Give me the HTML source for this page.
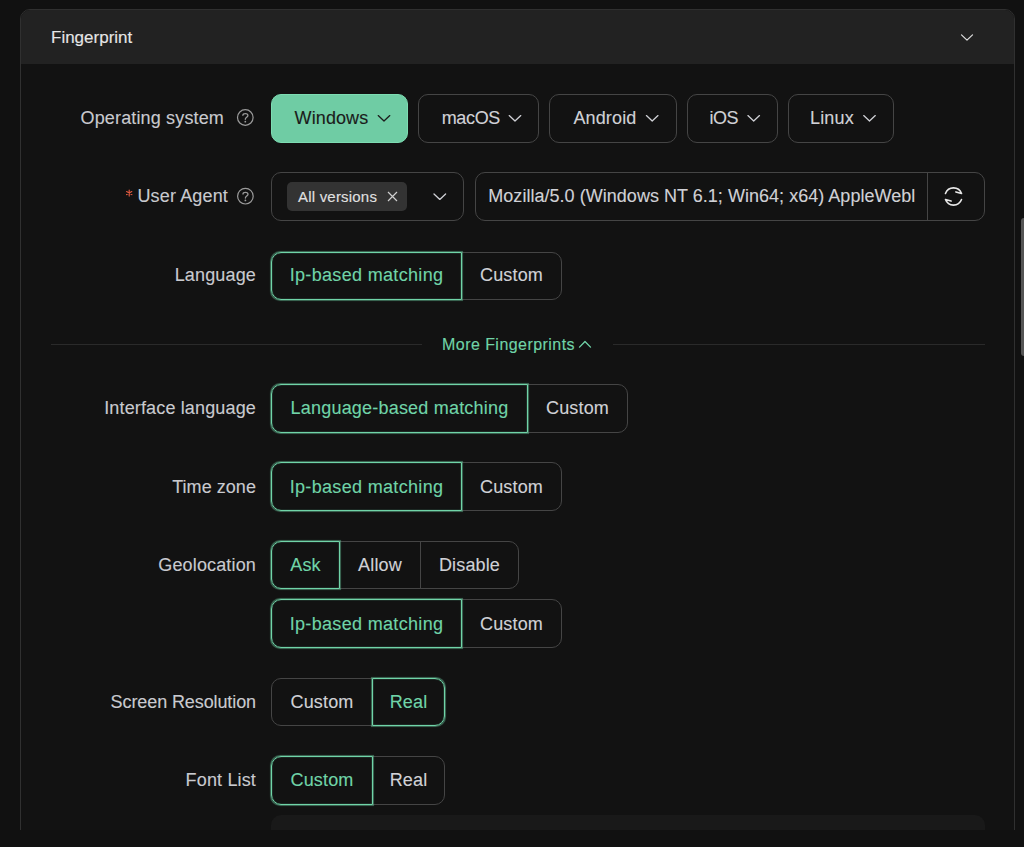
<!DOCTYPE html>
<html><head><meta charset="utf-8">
<style>
*{box-sizing:border-box;margin:0;padding:0}
html,body{width:1024px;height:847px;overflow:hidden;background:#111111}
body{font-family:"Liberation Sans",sans-serif;position:relative;color:#dcdcdc}
#clip{position:absolute;left:0;top:0;width:1024px;height:830px;overflow:hidden}
#card{position:absolute;left:20px;top:9px;width:995px;height:900px;border:1px solid #303030;border-radius:10px;background:#121212;overflow:hidden}
#hdr{position:absolute;left:0;top:0;width:100%;height:54px;background:#222222}
.abs{position:absolute}
.t{position:absolute;white-space:nowrap;line-height:20px;z-index:5;-webkit-text-stroke:0.12px currentColor}
svg{position:absolute;overflow:visible;z-index:6}
#sb{position:absolute;left:1021px;top:218px;width:6px;height:138px;border-radius:3px;background:#555555}
</style></head><body>
<div id="clip">
<div id="card"><div id="hdr"></div></div>

<div class="t" style="left:51px;top:28.02px;color:#e6e6e6;font-size:17px;letter-spacing:0px;">Fingerprint</div>
<svg width="1024" height="847" style="left:0;top:0"><path d="M961.5 34.9 L967 40.1 L972.5 34.9" fill="none" stroke="#dddddd" stroke-width="1.25" stroke-linecap="round" stroke-linejoin="round"/></svg>
<div class="t" style="right:800px;top:108.01px;color:#c9cacf;font-size:18px;letter-spacing:0.15px;">Operating system</div>
<svg width="1024" height="847" style="left:0;top:0"><circle cx="245.3" cy="117.5" r="7.8" fill="none" stroke="#9a9a9a" stroke-width="1.2"/><path d="M242.9 115.3 C242.9 113.1 247.9 112.9 247.9 115.5 C247.9 117.3 245.3 117.3 245.3 119.3" fill="none" stroke="#9a9a9a" stroke-width="1.3" stroke-linecap="round"/><circle cx="245.3" cy="121.7" r="0.9" fill="#9a9a9a"/></svg>
<div class="abs" style="left:271px;top:94px;width:137px;height:49px;border-radius:10px;background:#6fcca4;border:1px solid #7ddcb2;z-index:2"></div>
<div class="t" style="left:294.6px;top:108.01px;color:#1b1b1b;font-size:18px;letter-spacing:0.1px;">Windows</div>
<svg width="1024" height="847" style="left:0;top:0"><path d="M378.2 115.6 L384 121.0 L389.8 115.6" fill="none" stroke="#1b1b1b" stroke-width="1.3" stroke-linecap="round" stroke-linejoin="round"/></svg>
<div class="abs" style="left:418px;top:94px;width:121px;height:49px;border:1px solid #454545;border-radius:10px;background:transparent;z-index:2;"></div>
<div class="t" style="left:441.7px;top:108.01px;color:#d0d1d6;font-size:18px;letter-spacing:-0.35px;">macOS</div>
<svg width="1024" height="847" style="left:0;top:0"><path d="M509.2 115.6 L515 121.0 L520.8 115.6" fill="none" stroke="#d0d1d6" stroke-width="1.3" stroke-linecap="round" stroke-linejoin="round"/></svg>
<div class="abs" style="left:549px;top:94px;width:128px;height:49px;border:1px solid #454545;border-radius:10px;background:transparent;z-index:2;"></div>
<div class="t" style="left:573.4px;top:108.01px;color:#d0d1d6;font-size:18px;letter-spacing:0.15px;">Android</div>
<svg width="1024" height="847" style="left:0;top:0"><path d="M646.4000000000001 115.6 L652.2 121.0 L658.0 115.6" fill="none" stroke="#d0d1d6" stroke-width="1.3" stroke-linecap="round" stroke-linejoin="round"/></svg>
<div class="abs" style="left:687px;top:94px;width:91px;height:49px;border:1px solid #454545;border-radius:10px;background:transparent;z-index:2;"></div>
<div class="t" style="left:709.6px;top:108.01px;color:#d0d1d6;font-size:18px;letter-spacing:-0.5px;">iOS</div>
<svg width="1024" height="847" style="left:0;top:0"><path d="M747.9000000000001 115.6 L753.7 121.0 L759.5 115.6" fill="none" stroke="#d0d1d6" stroke-width="1.3" stroke-linecap="round" stroke-linejoin="round"/></svg>
<div class="abs" style="left:788px;top:94px;width:106px;height:49px;border:1px solid #454545;border-radius:10px;background:transparent;z-index:2;"></div>
<div class="t" style="left:810px;top:108.01px;color:#d0d1d6;font-size:18px;letter-spacing:0.15px;">Linux</div>
<svg width="1024" height="847" style="left:0;top:0"><path d="M863.7 115.6 L869.5 121.0 L875.3 115.6" fill="none" stroke="#d0d1d6" stroke-width="1.3" stroke-linecap="round" stroke-linejoin="round"/></svg>
<svg width="1024" height="847" style="left:0;top:0"><path d="M129.20 190.10 L129.20 196.10 M126.60 191.60 L131.80 194.60 M131.80 191.60 L126.60 194.60 " stroke="#e05a40" stroke-width="1.15" stroke-linecap="round"/></svg>
<div class="t" style="right:796px;top:186.01px;color:#c9cacf;font-size:18px;letter-spacing:0.15px;">User Agent</div>
<svg width="1024" height="847" style="left:0;top:0"><circle cx="245.4" cy="196.2" r="7.8" fill="none" stroke="#9a9a9a" stroke-width="1.2"/><path d="M243.0 194.0 C243.0 191.79999999999998 248.0 191.6 248.0 194.2 C248.0 196.0 245.4 196.0 245.4 198.0" fill="none" stroke="#9a9a9a" stroke-width="1.3" stroke-linecap="round"/><circle cx="245.4" cy="200.39999999999998" r="0.9" fill="#9a9a9a"/></svg>
<div class="abs" style="left:271px;top:172px;width:193px;height:49px;border:1px solid #454545;border-radius:10px;background:transparent;z-index:2;"></div>
<div class="abs" style="left:287px;top:182px;width:120px;height:29px;border-radius:5px;background:#333333;z-index:3"></div>
<div class="t" style="left:298px;top:187.25px;color:#e0e0e0;font-size:15px;letter-spacing:0.2px;">All versions</div>
<svg width="1024" height="847" style="left:0;top:0"><path d="M388 192 L397 201 M397 192 L388 201" stroke="#cfcfcf" stroke-width="1.2"/></svg>
<svg width="1024" height="847" style="left:0;top:0"><path d="M434.0 194.0 L439.8 199.39999999999998 L445.6 194.0" fill="none" stroke="#d0d1d6" stroke-width="1.3" stroke-linecap="round" stroke-linejoin="round"/></svg>
<div class="abs" style="left:475px;top:172px;width:510px;height:49px;border:1px solid #454545;border-radius:10px;background:transparent;z-index:2;"></div>
<div class="abs" style="left:927px;top:173px;width:1px;height:47px;background:#454545;z-index:3"></div>
<div class="t" style="left:488.3px;top:186.01px;color:#d0d1d6;font-size:18px;letter-spacing:0.03px;">Mozilla/5.0 (Windows NT 6.1; Win64; x64) AppleWebl</div>
<svg width="1024" height="847" style="left:0;top:0"><g fill="none" stroke="#e8e8e8" stroke-width="1.6" stroke-linecap="round" stroke-linejoin="round"><path d="M945.47 193.42 A8.6 8.6 0 0 1 961.53 193.42 L955.93 191.92"/><path d="M961.53 199.58 A8.6 8.6 0 0 1 945.47 199.58 L951.07 201.08"/></g></svg>
<div class="t" style="right:768px;top:265.01px;color:#c9cacf;font-size:18px;letter-spacing:0.15px;">Language</div>
<div class="abs" style="left:271px;top:252px;width:191px;height:48px;border:1px solid #70d4a8;border-radius:10px 0 0 10px;background:transparent;z-index:3;box-shadow:0 0 0.8px 0.3px rgba(112,212,168,0.45), inset 0 0 0.8px 0.3px rgba(112,212,168,0.45);"></div>
<div class="t" style="left:216.5px;width:300px;text-align:center;top:265.01px;color:#70d4a8;font-size:18px;letter-spacing:0.33px;">Ip-based matching</div>
<div class="abs" style="left:461px;top:252px;width:101px;height:48px;border:1px solid #454545;border-radius:0 10px 10px 0;background:transparent;z-index:2;"></div>
<div class="t" style="left:361.5px;width:300px;text-align:center;top:265.01px;color:#d0d1d6;font-size:18px;letter-spacing:0.15px;">Custom</div>
<div class="abs" style="left:51px;top:344px;width:371px;height:1px;background:#2a2a2a;z-index:2"></div>
<div class="abs" style="left:613px;top:344px;width:372px;height:1px;background:#2a2a2a;z-index:2"></div>
<div class="t" style="left:442px;top:334.85px;color:#70d4a8;font-size:16px;letter-spacing:0.45px;">More Fingerprints</div>
<svg width="1024" height="847" style="left:0;top:0"><path d="M579.5 347.1 L585 341.5 L590.5 347.1" fill="none" stroke="#70d4a8" stroke-width="1.35" stroke-linecap="round" stroke-linejoin="round"/></svg>
<div class="t" style="right:768px;top:398.01px;color:#c9cacf;font-size:18px;letter-spacing:0.15px;">Interface language</div>
<div class="abs" style="left:271px;top:384px;width:257px;height:49px;border:1px solid #70d4a8;border-radius:10px 0 0 10px;background:transparent;z-index:3;box-shadow:0 0 0.8px 0.3px rgba(112,212,168,0.45), inset 0 0 0.8px 0.3px rgba(112,212,168,0.45);"></div>
<div class="t" style="left:249.5px;width:300px;text-align:center;top:398.01px;color:#70d4a8;font-size:18px;letter-spacing:0.2px;">Language-based matching</div>
<div class="abs" style="left:527px;top:384px;width:101px;height:49px;border:1px solid #454545;border-radius:0 10px 10px 0;background:transparent;z-index:2;"></div>
<div class="t" style="left:427.5px;width:300px;text-align:center;top:398.01px;color:#d0d1d6;font-size:18px;letter-spacing:0.15px;">Custom</div>
<div class="t" style="right:768px;top:477.01px;color:#c9cacf;font-size:18px;letter-spacing:0.05px;">Time zone</div>
<div class="abs" style="left:271px;top:462px;width:191px;height:49px;border:1px solid #70d4a8;border-radius:10px 0 0 10px;background:transparent;z-index:3;box-shadow:0 0 0.8px 0.3px rgba(112,212,168,0.45), inset 0 0 0.8px 0.3px rgba(112,212,168,0.45);"></div>
<div class="t" style="left:216.5px;width:300px;text-align:center;top:477.01px;color:#70d4a8;font-size:18px;letter-spacing:0.33px;">Ip-based matching</div>
<div class="abs" style="left:461px;top:462px;width:101px;height:49px;border:1px solid #454545;border-radius:0 10px 10px 0;background:transparent;z-index:2;"></div>
<div class="t" style="left:361.5px;width:300px;text-align:center;top:477.01px;color:#d0d1d6;font-size:18px;letter-spacing:0.15px;">Custom</div>
<div class="t" style="right:768px;top:555.01px;color:#c9cacf;font-size:18px;letter-spacing:0.15px;">Geolocation</div>
<div class="abs" style="left:271px;top:541px;width:69px;height:48px;border:1px solid #70d4a8;border-radius:10px 0 0 10px;background:transparent;z-index:3;box-shadow:0 0 0.8px 0.3px rgba(112,212,168,0.45), inset 0 0 0.8px 0.3px rgba(112,212,168,0.45);"></div>
<div class="t" style="left:155.5px;width:300px;text-align:center;top:555.01px;color:#70d4a8;font-size:18px;letter-spacing:0.15px;">Ask</div>
<div class="abs" style="left:339px;top:541px;width:82px;height:48px;border:1px solid #454545;border-radius:0;background:transparent;z-index:2;"></div>
<div class="t" style="left:230.0px;width:300px;text-align:center;top:555.01px;color:#d0d1d6;font-size:18px;letter-spacing:0.15px;">Allow</div>
<div class="abs" style="left:420px;top:541px;width:99px;height:48px;border:1px solid #454545;border-radius:0 10px 10px 0;background:transparent;z-index:2;"></div>
<div class="t" style="left:319.5px;width:300px;text-align:center;top:555.01px;color:#d0d1d6;font-size:18px;letter-spacing:0.15px;">Disable</div>
<div class="abs" style="left:271px;top:599px;width:191px;height:49px;border:1px solid #70d4a8;border-radius:10px 0 0 10px;background:transparent;z-index:3;box-shadow:0 0 0.8px 0.3px rgba(112,212,168,0.45), inset 0 0 0.8px 0.3px rgba(112,212,168,0.45);"></div>
<div class="t" style="left:216.5px;width:300px;text-align:center;top:614.01px;color:#70d4a8;font-size:18px;letter-spacing:0.33px;">Ip-based matching</div>
<div class="abs" style="left:461px;top:599px;width:101px;height:49px;border:1px solid #454545;border-radius:0 10px 10px 0;background:transparent;z-index:2;"></div>
<div class="t" style="left:361.5px;width:300px;text-align:center;top:614.01px;color:#d0d1d6;font-size:18px;letter-spacing:0.15px;">Custom</div>
<div class="t" style="right:768px;top:692.01px;color:#c9cacf;font-size:18px;letter-spacing:-0.1px;">Screen Resolution</div>
<div class="abs" style="left:271px;top:678px;width:102px;height:48px;border:1px solid #454545;border-radius:10px 0 0 10px;background:transparent;z-index:2;"></div>
<div class="t" style="left:172.0px;width:300px;text-align:center;top:692.01px;color:#d0d1d6;font-size:18px;letter-spacing:0.15px;">Custom</div>
<div class="abs" style="left:372px;top:678px;width:73px;height:48px;border:1px solid #70d4a8;border-radius:0 10px 10px 0;background:transparent;z-index:3;box-shadow:0 0 0.8px 0.3px rgba(112,212,168,0.45), inset 0 0 0.8px 0.3px rgba(112,212,168,0.45);"></div>
<div class="t" style="left:258.5px;width:300px;text-align:center;top:692.01px;color:#70d4a8;font-size:18px;letter-spacing:0.15px;">Real</div>
<div class="t" style="right:768px;top:770.01px;color:#c9cacf;font-size:18px;letter-spacing:0.15px;">Font List</div>
<div class="abs" style="left:271px;top:756px;width:102px;height:49px;border:1px solid #70d4a8;border-radius:10px 0 0 10px;background:transparent;z-index:3;box-shadow:0 0 0.8px 0.3px rgba(112,212,168,0.45), inset 0 0 0.8px 0.3px rgba(112,212,168,0.45);"></div>
<div class="t" style="left:172.0px;width:300px;text-align:center;top:770.01px;color:#70d4a8;font-size:18px;letter-spacing:0.15px;">Custom</div>
<div class="abs" style="left:372px;top:756px;width:73px;height:49px;border:1px solid #454545;border-radius:0 10px 10px 0;background:transparent;z-index:2;"></div>
<div class="t" style="left:258.5px;width:300px;text-align:center;top:770.01px;color:#d0d1d6;font-size:18px;letter-spacing:0.15px;">Real</div>
<div class="abs" style="left:271px;top:814.5px;width:714px;height:60px;border-radius:10px;background:#191919;z-index:2"></div>
</div>
<div id="sb"></div>
</body></html>
